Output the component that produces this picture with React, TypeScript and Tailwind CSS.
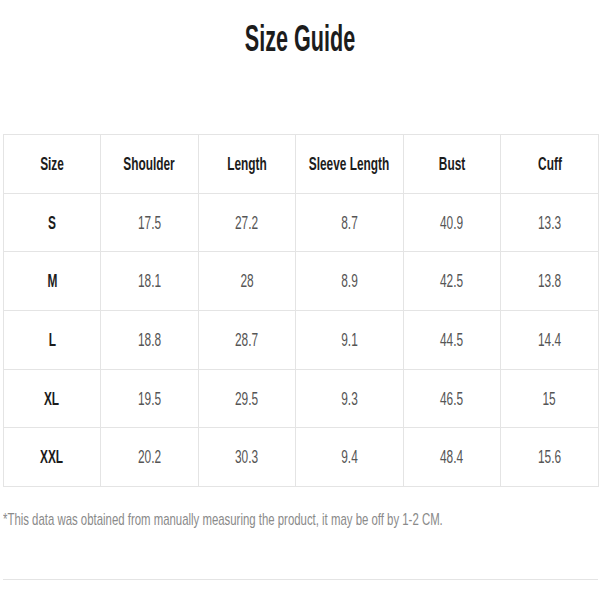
const headers = ["Size", "Shoulder", "Length", "Sleeve Length", "Bust", "Cuff"];

const rows = [
  ["S", "17.5", "27.2", "8.7", "40.9", "13.3"],
  ["M", "18.1", "28", "8.9", "42.5", "13.8"],
  ["L", "18.8", "28.7", "9.1", "44.5", "14.4"],
  ["XL", "19.5", "29.5", "9.3", "46.5", "15"],
  ["XXL", "20.2", "30.3", "9.4", "48.4", "15.6"],
];

function Cell({ text, bold }: { text: string; bold?: boolean }) {
  return (
    <div className="flex h-[58.7px] items-center justify-center border-r border-b border-[#e4e4e4]">
      <span
        className={`inline-block scale-x-[0.66] whitespace-nowrap text-[18px] leading-none ${
          bold ? "font-bold text-[#1c1c1c]" : "text-[#555555]"
        }`}
      >
        {text}
      </span>
    </div>
  );
}

export default function App() {
  return (
    <div className="h-[600px] w-[600px] overflow-hidden bg-white font-['Liberation_Sans',Arial,sans-serif]">
      <h1 className="pt-[21px] text-center text-[36px] font-bold leading-none text-[#1c1c1c]">
        <span className="inline-block scale-x-[0.6] whitespace-nowrap">Size Guide</span>
      </h1>

      <div className="ml-[3px] mt-[77px] grid w-[596px] grid-cols-[97px_98px_97px_108px_97px_98px] border-t border-l border-[#e4e4e4]">
        {headers.map((h) => (
          <Cell key={h} text={h} bold />
        ))}
        {rows.map((r) =>
          r.map((v, i) => <Cell key={r[0] + i} text={v} bold={i === 0} />)
        )}
      </div>

      <p className="ml-[3px] mt-[24px] text-[17px] leading-none text-[#8a8a8a]">
        <span className="inline-block origin-left scale-x-[0.67] whitespace-nowrap">
          *This data was obtained from manually measuring the product, it may be off by 1-2 CM.
        </span>
      </p>

      <div className="ml-[3px] mt-[51px] h-px w-[595px] bg-[#e4e4e4]" />
    </div>
  );
}
